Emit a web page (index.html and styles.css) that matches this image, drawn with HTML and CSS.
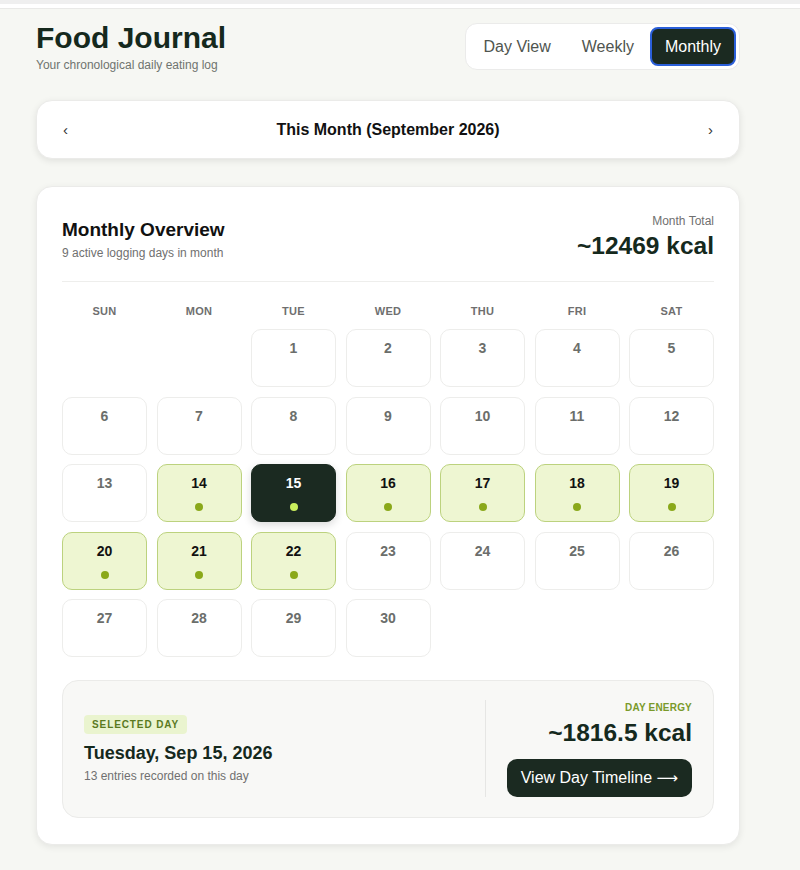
FILE: index.html
```html
<!DOCTYPE html>
<html lang="en">
<head>
<meta charset="utf-8">
<title>Food Journal</title>
<link rel="stylesheet" href="styles.css">
</head>
<body>
<div class="topbar"></div>
<main class="page">
  <header class="header">
    <div class="brand">
      <h1 class="title">Food Journal</h1>
      <p class="subtitle">Your chronological daily eating log</p>
    </div>
    <nav class="toggle">
      <button class="tab">Day View</button>
      <button class="tab">Weekly</button>
      <button class="tab active">Monthly</button>
    </nav>
  </header>

  <section class="navcard">
    <span class="arrow">‹</span>
    <span class="navtitle">This Month (September 2026)</span>
    <span class="arrow">›</span>
  </section>

  <section class="card">
    <div class="card-head">
      <div class="head-left">
        <h2 class="ov-title">Monthly Overview</h2>
        <p class="ov-sub">9 active logging days in month</p>
      </div>
      <div class="head-right">
        <div class="tot-label">Month Total</div>
        <div class="tot-value">~12469 kcal</div>
      </div>
    </div>

    <div class="weekdays">
      <span>SUN</span><span>MON</span><span>TUE</span><span>WED</span><span>THU</span><span>FRI</span><span>SAT</span>
    </div>
    <div class="grid">
      <div class="cell empty"></div>
      <div class="cell empty"></div>
      <div class="cell"><span class="num">1</span></div>
      <div class="cell"><span class="num">2</span></div>
      <div class="cell"><span class="num">3</span></div>
      <div class="cell"><span class="num">4</span></div>
      <div class="cell"><span class="num">5</span></div>
      <div class="cell"><span class="num">6</span></div>
      <div class="cell"><span class="num">7</span></div>
      <div class="cell"><span class="num">8</span></div>
      <div class="cell"><span class="num">9</span></div>
      <div class="cell"><span class="num">10</span></div>
      <div class="cell"><span class="num">11</span></div>
      <div class="cell"><span class="num">12</span></div>
      <div class="cell"><span class="num">13</span></div>
      <div class="cell on"><span class="num">14</span><span class="dot"></span></div>
      <div class="cell sel"><span class="num">15</span><span class="dot"></span></div>
      <div class="cell on"><span class="num">16</span><span class="dot"></span></div>
      <div class="cell on"><span class="num">17</span><span class="dot"></span></div>
      <div class="cell on"><span class="num">18</span><span class="dot"></span></div>
      <div class="cell on"><span class="num">19</span><span class="dot"></span></div>
      <div class="cell on"><span class="num">20</span><span class="dot"></span></div>
      <div class="cell on"><span class="num">21</span><span class="dot"></span></div>
      <div class="cell on"><span class="num">22</span><span class="dot"></span></div>
      <div class="cell"><span class="num">23</span></div>
      <div class="cell"><span class="num">24</span></div>
      <div class="cell"><span class="num">25</span></div>
      <div class="cell"><span class="num">26</span></div>
      <div class="cell"><span class="num">27</span></div>
      <div class="cell"><span class="num">28</span></div>
      <div class="cell"><span class="num">29</span></div>
      <div class="cell"><span class="num">30</span></div>
    </div>

    <div class="panel">
      <div class="panel-left">
        <span class="badge">SELECTED DAY</span>
        <h3 class="day-title">Tuesday, Sep 15, 2026</h3>
        <p class="day-sub">13 entries recorded on this day</p>
      </div>
      <div class="panel-right">
        <div class="en-label">DAY ENERGY</div>
        <div class="en-value">~1816.5 kcal</div>
        <button class="cta">View Day Timeline <span class="cta-arrow">⟶</span></button>
      </div>
    </div>
  </section>
</main>
</body>
</html>
```

FILE: styles.css
```css
* { box-sizing: border-box; }
html, body { margin: 0; padding: 0; }
body {
  background: #f6f7f3;
  font-family: "Liberation Sans", Arial, sans-serif;
  color: #1b2a21;
}
.topbar {
  height: 9px;
  border-top: 4px solid #efefef;
  border-bottom: 1px solid #e9e9e7;
  background: #ffffff;
}
.page {
  width: 704px;
  margin-left: 36px;
  padding-top: 14px;
  padding-bottom: 24px;
}
.header {
  display: flex;
  justify-content: space-between;
  align-items: flex-start;
}
.title {
  margin: 0;
  font-size: 30px;
  line-height: 30px;
  font-weight: 700;
  color: #15291d;
}
.subtitle {
  margin: 4px 0 0;
  font-size: 12px;
  line-height: 16px;
  color: #6f746f;
}
.toggle {
  display: flex;
  gap: 1px;
  padding: 3px;
  background: #ffffff;
  border: 1px solid #ebebea;
  border-radius: 12px;
}
.tab {
  height: 39px;
  padding: 0 13px;
  border: 2px solid transparent;
  border-radius: 8px;
  background: transparent;
  font-family: "Liberation Sans", Arial, sans-serif;
  font-size: 16px;
  color: #4f554f;
  cursor: pointer;
}
.tab.active {
  background: #1b2a21;
  border-color: #2b5fd9;
  color: #ffffff;
}
.navcard {
  margin-top: 27px;
  height: 59px;
  display: flex;
  align-items: center;
  justify-content: space-between;
  padding: 0 26px 0 26px;
  background: #ffffff;
  border: 1px solid #ebebe9;
  border-radius: 16px;
  box-shadow: 0 2px 7px rgba(0, 0, 0, 0.09);
}
.arrow {
  font-size: 15px;
  color: #333;
}
.navtitle {
  font-size: 16px;
  font-weight: 700;
  color: #111;
}
.card {
  margin-top: 27px;
  padding: 26px 25px 26px;
  background: #ffffff;
  border: 1px solid #ebebe9;
  border-radius: 16px;
  box-shadow: 0 2px 7px rgba(0, 0, 0, 0.08);
}
.card-head {
  display: flex;
  justify-content: space-between;
  align-items: flex-start;
  padding-bottom: 20px;
  border-bottom: 1px solid #eeeeec;
}
.head-left { padding-top: 6px; }
.ov-title {
  margin: 0;
  font-size: 19px;
  line-height: 22px;
  font-weight: 700;
  color: #111;
}
.ov-sub {
  margin: 4px 0 0;
  font-size: 12px;
  line-height: 16px;
  color: #707070;
}
.head-right { text-align: right; }
.tot-label {
  font-size: 12px;
  line-height: 16px;
  color: #707070;
}
.tot-value {
  margin-top: 2px;
  font-size: 24.5px;
  line-height: 30px;
  font-weight: 700;
  color: #15291d;
}
.weekdays {
  margin-top: 22px;
  display: grid;
  grid-template-columns: repeat(7, 1fr);
  column-gap: 9.5px;
  margin-bottom: 11px;
}
.weekdays span {
  text-align: center;
  font-size: 11px;
  line-height: 14px;
  font-weight: 700;
  color: #6f6f6f;
  letter-spacing: 0.3px;
}
.grid {
  display: grid;
  grid-template-columns: repeat(7, 1fr);
  gap: 9.5px;
}
.cell {
  height: 58px;
  border: 1px solid #ededeb;
  border-radius: 10px;
  background: #ffffff;
  display: flex;
  flex-direction: column;
  align-items: center;
  padding-top: 9px;
}
.cell.empty { border-color: transparent; }
.num {
  font-size: 14px;
  line-height: 18px;
  font-weight: 700;
  color: #6b6e6b;
}
.dot {
  width: 8px;
  height: 8px;
  border-radius: 50%;
  margin-top: 11px;
  background: #8aa81a;
}
.cell.on {
  background: #eef6d2;
  border-color: #bcd27e;
}
.cell.on .num { color: #111; }
.cell.sel {
  background: #1b2a21;
  border-color: #1b2a21;
  box-shadow: 0 3px 8px rgba(0, 0, 0, 0.15);
}
.cell.sel .num { color: #ffffff; }
.cell.sel .dot { background: #c9ee5c; }
.panel {
  margin-top: 23px;
  display: flex;
  align-items: center;
  padding: 19px 21px 20px 21px;
  background: #f8f8f6;
  border: 1px solid #ebebe9;
  border-radius: 16px;
}
.panel-left { flex: 1; }
.badge {
  display: inline-block;
  height: 19px;
  line-height: 19px;
  padding: 0 8px;
  border-radius: 4px;
  background: #eaf4cf;
  color: #5a7a1f;
  font-size: 10px;
  font-weight: 700;
  letter-spacing: 0.9px;
}
.day-title {
  margin: 8px 0 0;
  font-size: 18px;
  line-height: 22px;
  font-weight: 700;
  color: #15291d;
}
.day-sub {
  margin: 4px 0 0;
  font-size: 12px;
  line-height: 16px;
  color: #707070;
}
.panel-right {
  border-left: 1px solid #e6e6e4;
  padding-left: 21px;
  display: flex;
  flex-direction: column;
  align-items: flex-end;
  text-align: right;
}
.en-label {
  margin-top: 1px;
  font-size: 10px;
  line-height: 14px;
  font-weight: 700;
  color: #7a9a2a;
  letter-spacing: 0.2px;
}
.en-value {
  margin-top: 4px;
  font-size: 24.5px;
  line-height: 28px;
  font-weight: 700;
  color: #15291d;
}
.cta {
  margin-top: 12px;
  height: 38px;
  padding: 0 14px;
  border: none;
  border-radius: 10px;
  background: #1b2a21;
  color: #ffffff;
  font-family: "Liberation Sans", Arial, sans-serif;
  font-size: 16px;
  cursor: pointer;
}
.cta-arrow {
  font-family: "DejaVu Sans", sans-serif;
  font-size: 15px;
}
```
